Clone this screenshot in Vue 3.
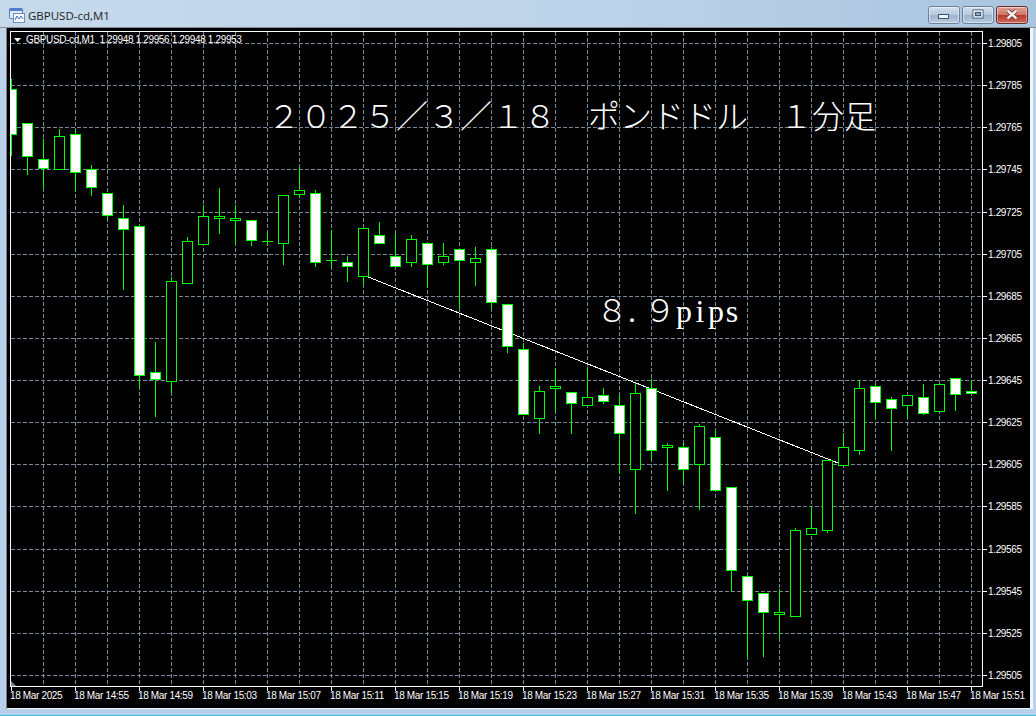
<template>
  <div class="window">
    <header class="titlebar">
      <svg class="app-icon" viewBox="0 0 16 16" width="16" height="16">
        <rect x="0.5" y="1.5" width="13" height="10" rx="1" fill="#dfeafa" stroke="#5b7fb5" />
        <rect x="0.5" y="1.5" width="13" height="2.5" fill="#4f7fd0" />
        <rect x="4.5" y="6.5" width="11" height="9" fill="#f4f8fe" stroke="#6f8fc0" />
        <path d="M6 13 L8 9 L10 12 L12 9 L14 12" fill="none" stroke="#3c6fb0" stroke-width="1" />
      </svg>
      <span class="title">GBPUSD-cd,M1</span>
      <div class="controls">
        <button class="ctl">
          <svg viewBox="0 0 32 18" width="32" height="18"><rect x="10.5" y="8.5" width="10" height="4" fill="#eef3f8" stroke="#44546a" /></svg>
        </button>
        <button class="ctl">
          <svg viewBox="0 0 32 18" width="32" height="18"><rect x="11" y="4" width="10" height="8" fill="none" stroke="#44546a" stroke-width="1" /><rect x="12" y="5" width="8" height="6" fill="none" stroke="#eef3f8" stroke-width="1" /><rect x="13.5" y="6.5" width="5" height="3" fill="#8fa9c4" stroke="#44546a" /></svg>
        </button>
        <button class="ctl close">
          <svg viewBox="0 0 32 18" width="32" height="18"><path d="M11.5 4.5 L20.5 12.5 M20.5 4.5 L11.5 12.5" stroke="#5c2a28" stroke-width="4" /><path d="M11.5 4.5 L20.5 12.5 M20.5 4.5 L11.5 12.5" stroke="#f5f1f0" stroke-width="2.4" /></svg>
        </button>
      </div>
    </header>

    <div class="frame">
      <svg class="chart" viewBox="7 28 1023 680" width="1023" height="680" xmlns="http://www.w3.org/2000/svg">
        <defs>
          <clipPath id="plot-clip">
            <rect x="11" y="32" width="971" height="654" />
          </clipPath>
        </defs>

        <!-- grid -->
        <g class="grid">
          <line v-for="p in prices" :key="p.label" x1="11" :y1="p.y + 0.5" x2="982" :y2="p.y + 0.5" />
          <line v-for="x in gridX" :key="x" :x1="x + 0.5" y1="32" :x2="x + 0.5" y2="686" />
        </g>

        <!-- axes -->
        <g class="axis">
          <line x1="10.5" y1="31.5" x2="982.5" y2="31.5" />
          <line x1="10.5" y1="31" x2="10.5" y2="687" />
          <line x1="982.5" y1="31" x2="982.5" y2="687" />
          <line x1="10" y1="686.5" x2="983" y2="686.5" />
          <line v-for="p in prices" :key="p.label" x1="983" :y1="p.y + 0.5" x2="987" :y2="p.y + 0.5" />
          <line v-for="t in times" :key="t.label" :x1="t.x + 0.5" y1="686" :x2="t.x + 0.5" y2="691" />
        </g>

        <text v-for="p in prices" :key="p.label" class="label" x="988" :y="p.y + 4">{{ p.label }}</text>
        <text v-for="t in times" :key="t.label" class="label" :x="t.x - 1" y="699">{{ t.label }}</text>

        <polygon points="14,38 21,38 17.5,42" fill="#fff" />
        <text class="label" x="26" y="43">GBPUSD-cd,M1&#160;&#160;1.29948 1.29956 1.29948 1.29953</text>
        <polygon points="11,681 16,686 11,686" fill="#778899" />

        <!-- trend line -->
        <line class="trend" x1="363" y1="275" x2="838" y2="463" />

        <!-- candles -->
        <g class="candles" clip-path="url(#plot-clip)">
          <g v-for="c in candles" :key="c.x">
            <line class="wick" :x1="c.x + 0.5" :y1="c.high" :x2="c.x + 0.5" :y2="c.low" />
            <line v-if="c.top === c.bottom" class="wick" :x1="c.x - 5" :y1="c.top + 0.5" :x2="c.x + 6" :y2="c.top + 0.5" />
            <rect
              v-else
              class="body"
              :class="{ bear: c.bear }"
              :x="c.x - 4.5"
              :y="c.top + 0.5"
              width="10"
              :height="c.bottom - c.top"
            />
          </g>
        </g>

        <!-- annotations -->
        <text class="note" x="268" y="128">２０２５／３／１８　ポンドドル　１分足</text>
        <text class="note" x="596" y="322">８</text>
        <text class="note latin" x="628" y="322">.</text>
        <text class="note" x="644" y="322">９</text>
        <text class="note latin cells" x="684 700 716 732" y="322">pips</text>
      </svg>
    </div>
  </div>
</template>

<script setup>
// [high, bodyTop, bodyBottom, low, filled] in page pixels, one per bar, 16px apart
const bars = [
  [79, 89, 134, 156, 1], [123, 123, 156, 175, 1], [139, 159, 168, 189, 1], [129, 136, 169, 169, 0],
  [129, 134, 172, 191, 1], [165, 169, 187, 196, 1], [193, 193, 215, 219, 1], [205, 218, 229, 290, 1],
  [224, 226, 375, 388, 1], [342, 372, 379, 417, 1], [277, 281, 381, 393, 0], [237, 241, 283, 283, 0],
  [205, 216, 244, 244, 0], [188, 216, 218, 234, 0], [205, 218, 220, 244, 0], [220, 220, 240, 246, 1],
  [233, 241, 241, 246, 0], [195, 195, 243, 265, 0], [167, 190, 194, 198, 0], [190, 193, 262, 267, 1],
  [230, 260, 260, 267, 0], [256, 262, 266, 282, 1], [228, 228, 276, 285, 0], [222, 235, 243, 243, 1],
  [233, 256, 266, 267, 1], [235, 239, 262, 267, 0], [243, 243, 264, 288, 1], [243, 256, 262, 265, 0],
  [249, 249, 260, 309, 1], [247, 258, 262, 286, 0], [247, 249, 302, 308, 1], [304, 304, 346, 353, 1],
  [343, 349, 414, 414, 1], [386, 391, 418, 434, 0], [368, 386, 388, 412, 0], [392, 392, 403, 434, 1],
  [367, 397, 405, 405, 0], [388, 395, 401, 404, 1], [395, 405, 433, 474, 1], [383, 393, 469, 514, 0],
  [379, 388, 450, 459, 1], [443, 445, 447, 491, 0], [443, 447, 469, 483, 1], [424, 426, 464, 510, 0],
  [431, 437, 490, 490, 1], [487, 487, 570, 592, 1], [576, 576, 600, 658, 1], [593, 593, 612, 657, 1],
  [589, 612, 614, 638, 0], [528, 530, 616, 616, 0], [506, 528, 534, 534, 0], [460, 460, 530, 533, 0],
  [433, 447, 465, 467, 0], [380, 388, 450, 455, 0], [384, 386, 402, 419, 1], [397, 399, 408, 451, 1],
  [395, 395, 405, 418, 0], [384, 397, 413, 415, 1], [384, 384, 411, 411, 0], [378, 378, 394, 411, 1],
  [380, 391, 393, 393, 1]
]

const candles = bars.map(([high, top, bottom, low, bear], i) => ({
  x: 11 + i * 16,
  high,
  top,
  bottom,
  low,
  bear: bear === 1
}))

const prices = Array.from({ length: 16 }, (_, i) => ({
  y: Math.round(43 + i * 42.13),
  label: (1.29805 - i * 0.0002).toFixed(5)
}))

const gridX = Array.from({ length: 30 }, (_, i) => 43 + i * 32)

const clock = ['14:55', '14:59', '15:03', '15:07', '15:11', '15:15', '15:19', '15:23', '15:27', '15:31', '15:35', '15:39', '15:43', '15:47', '15:51']
const times = [
  { x: 11, label: '18 Mar 2025' },
  ...clock.map((c, i) => ({ x: 75 + i * 64, label: `18 Mar ${c}` }))
]
</script>

<style scoped>
.window {
  width: 1036px;
  height: 716px;
  box-sizing: border-box;
  display: flex;
  flex-direction: column;
  background: linear-gradient(180deg, #c3d7ea 0, #b9d1ea 110px, #b9d1ea 100%);
  border-bottom: 1px solid #3fbcdc;
  overflow: hidden;
}

.titlebar {
  height: 27px;
  flex: none;
  display: flex;
  align-items: center;
  padding: 0 8px 0 9px;
  background: linear-gradient(90deg, #c6daec 0, #bcd2e8 60%, #a9c4de 100%);
  border-bottom: 1px solid #8a8f96;
  box-sizing: content-box;
}

.app-icon {
  margin-top: 3px;
}

.title {
  margin-left: 3px;
  margin-top: 3px;
  font: 11.5px "Open Sans", sans-serif;
  color: #1c1c1c;
}

.controls {
  margin-left: auto;
  display: flex;
  gap: 2px;
  margin-top: 2px;
}

.ctl {
  width: 32px;
  height: 18px;
  padding: 0;
  border: 1px solid #6e8199;
  border-radius: 3px;
  background: linear-gradient(180deg, #d3e0ee 0, #b4c8dd 50%, #9cb5cf 52%, #b5cade 100%);
  box-shadow: inset 0 0 0 1px rgba(255, 255, 255, 0.45);
  display: flex;
  align-items: center;
  justify-content: center;
  overflow: hidden;
}

.ctl svg {
  flex: none;
}

.close {
  border-color: #6a2a2e;
  background: linear-gradient(180deg, #e0a196 0, #d0766a 48%, #b8392c 52%, #cc6a5a 100%);
}

.frame {
  margin: 0 6px 0 7px;
  height: 680px;
  flex: none;
  border-bottom: 1px solid #f2f5f8;
  border-right: 3px solid #f2f5f8;
  box-shadow: -1px 0 0 #7f7f7f;
  width: 1023px;
}

.chart {
  display: block;
  background: #000;
}

.grid line {
  stroke: #778899;
  stroke-width: 1;
  stroke-dasharray: 4 2;
  shape-rendering: crispEdges;
}

.axis line {
  stroke: #fff;
  stroke-width: 1;
  shape-rendering: crispEdges;
}

.label {
  font: 10px "Liberation Sans", sans-serif;
  letter-spacing: -0.35px;
  fill: #fff;
}

.trend {
  stroke: #fff;
  stroke-width: 1;
  shape-rendering: crispEdges;
}

.wick {
  stroke: #0f0;
  stroke-width: 1;
  shape-rendering: crispEdges;
}

.body {
  fill: #000;
  stroke: #0f0;
  stroke-width: 1;
  shape-rendering: crispEdges;
}

.bear {
  fill: #fff;
}

.note {
  font: 300 32px "Noto Sans CJK JP", sans-serif;
  fill: #fff;
}

.latin {
  font: 400 32px "Liberation Serif", "Noto Sans CJK JP", serif;
}

.cells {
  text-anchor: middle;
}
</style>
